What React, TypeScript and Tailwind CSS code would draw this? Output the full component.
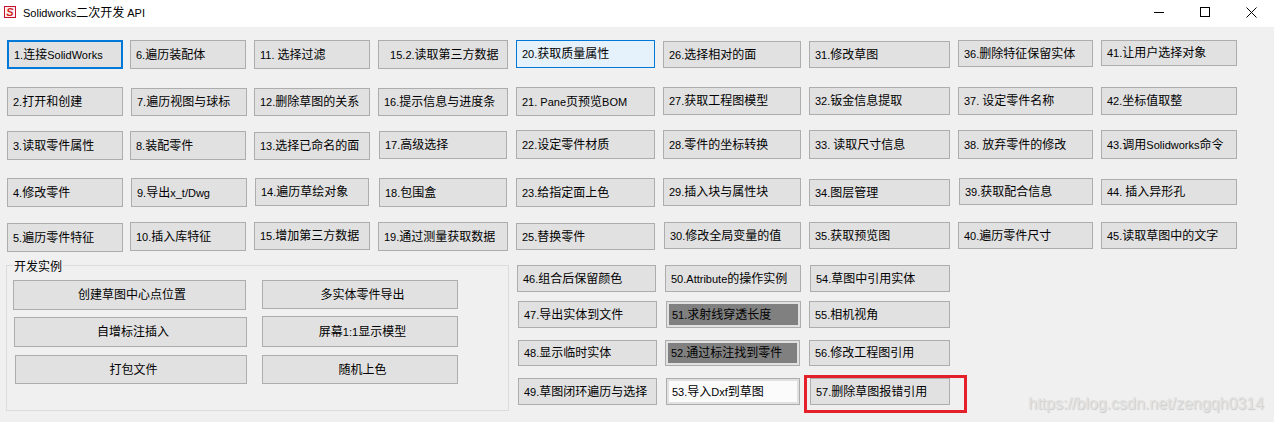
import React from "react";

type Kind = "normal" | "focus" | "hover" | "dark" | "white" | "mark";
type Item = [string, string, Kind?];

const CJK = /([\u3000-\u9fff\uff00-\uffef]+)/;

// mixed text: Chinese at 12px, latin a bit smaller like the WinForms default font
function Txt({ s }: { s: string }) {
  return (
    <>
      {s.split(CJK).map((p, i) =>
        p === "" ? null : CJK.test(p) ? (
          <span key={i} className="text-[12px]">
            {p}
          </span>
        ) : (
          <span key={i} className="text-[11px]">
            {p}
          </span>
        ),
      )}
    </>
  );
}

function Btn({ label, cls, kind = "normal", center = false }: { label: string; cls: string; kind?: Kind; center?: boolean }) {
  const align = center ? "justify-center" : "justify-start";

  if (kind === "dark" || kind === "white") {
    return (
      <button className={`flex shrink-0 border border-[#adadad] bg-[#e1e1e1] p-[2px] text-black ${cls}`}>
        <span
          className={`flex h-full w-full items-center whitespace-pre pl-[3px] leading-[14px] ${
            kind === "dark" ? "bg-[#808080]" : "bg-[#fbfbfb]"
          }`}
        >
          <Txt s={label} />
        </span>
      </button>
    );
  }

  let skin = "border border-[#adadad] bg-[#e1e1e1] pl-[5px]";
  if (kind === "focus") skin = "border-2 border-[#0078d7] bg-[#e1e1e1] pl-[5px]";
  if (kind === "hover") skin = "border border-[#0078d7] bg-[#e5f1fb] pl-[5px]";

  return (
    <button className={`relative flex shrink-0 items-center whitespace-pre leading-[14px] text-black ${align} ${skin} ${cls}`}>
      <Txt s={label} />
      {kind === "mark" && (
        <span className="absolute -left-[7px] -top-[4px] h-[38px] w-[163px] border-[3px] border-[#e4202b]" />
      )}
    </button>
  );
}

function Col({ items, cls }: { items: Item[]; cls: string }) {
  return (
    <div className={`flex shrink-0 flex-col ${cls}`}>
      {items.map(([label, c, kind]) => (
        <Btn key={label} label={label} cls={c} kind={kind} />
      ))}
    </div>
  );
}

const col1: Item[] = [
  ["1.连接SolidWorks", "mt-[13px] h-[29px] w-[116px]", "focus"],
  ["2.打开和创建", "mt-[18px] h-[29px] w-[116px]"],
  ["3.读取零件属性", "mt-[15px] h-[29px] w-[116px]"],
  ["4.修改零件", "mt-[18px] h-[29px] w-[116px]"],
  ["5.遍历零件特征", "mt-[16px] h-[29px] w-[116px]"],
];

const col2: Item[] = [
  ["6.遍历装配体", "mt-[13px] h-[29px] w-[116px]"],
  ["7.遍历视图与球标", "mt-[19px] ml-[1px] h-[28px] w-[116px]"],
  ["8.装配零件", "mt-[15px] h-[29px] w-[116px]"],
  ["9.导出x_t/Dwg", "mt-[18px] ml-[1px] h-[29px] w-[116px]"],
  ["10.插入库特征", "mt-[15px] h-[29px] w-[116px]"],
];

const col3: Item[] = [
  ["11. 选择过滤", "mt-[13px] h-[29px] w-[116px]"],
  ["12.删除草图的关系", "mt-[19px] h-[28px] w-[116px]"],
  ["13.选择已命名的面", "mt-[16px] h-[28px] w-[116px]"],
  ["14.遍历草绘对象", "mt-[18px] ml-[1px] h-[28px] w-[114px]"],
  ["15.增加第三方数据", "mt-[16px] h-[28px] w-[116px]"],
];

const col4: Item[] = [
  ["  15.2.读取第三方数据", "mt-[13px] h-[29px] w-[130px]"],
  ["16.提示信息与进度条", "mt-[19px] h-[28px] w-[130px]"],
  ["17.高级选择", "mt-[15px] ml-[1px] h-[28px] w-[128px]"],
  ["18.包围盒", "mt-[19px] ml-[1px] h-[29px] w-[128px]"],
  ["19.通过测量获取数据", "mt-[15px] h-[29px] w-[130px]"],
];

const col5: Item[] = [
  ["20.获取质量属性", "mt-[13px] h-[28px] w-[139px]", "hover"],
  ["21. Pane页预览BOM", "mt-[19px] h-[29px] w-[139px]"],
  ["22.设定零件材质", "mt-[14px] h-[29px] w-[139px]"],
  ["23.给指定面上色", "mt-[19px] h-[29px] w-[139px]"],
  ["25.替换零件", "mt-[16px] h-[27px] w-[139px]"],
  ["46.组合后保留颜色", "mt-[15px] ml-[1px] h-[27px] w-[139px]"],
  ["47.导出实体到文件", "mt-[9px] ml-[2px] h-[27px] w-[139px]"],
  ["48.显示临时实体", "mt-[12px] ml-[2px] h-[26px] w-[139px]"],
  ["49.草图闭环遍历与选择", "mt-[12px] ml-[2px] h-[27px] w-[139px]"],
];

const col6: Item[] = [
  ["26.选择相对的面", "mt-[14px] h-[27px] w-[138px]"],
  ["27.获取工程图模型", "mt-[19px] h-[28px] w-[138px]"],
  ["28.零件的坐标转换", "mt-[15px] h-[29px] w-[138px]"],
  ["29.插入块与属性块", "mt-[19px] h-[28px] w-[138px]"],
  ["30.修改全局变量的值", "mt-[16px] ml-[1px] h-[27px] w-[137px]"],
  ["50.Attribute的操作实例", "mt-[16px] ml-[2px] h-[27px] w-[136px]"],
  ["51.求射线穿透长度", "mt-[9px] ml-[3px] h-[27px] w-[135px]", "dark"],
  ["52.通过标注找到零件", "mt-[12px] ml-[2px] h-[26px] w-[135px]", "dark"],
  ["53.导入Dxf到草图", "mt-[12px] ml-[3px] h-[27px] w-[134px]", "white"],
];

const col7: Item[] = [
  ["31.修改草图", "mt-[14px] h-[27px] w-[141px]"],
  ["32.钣金信息提取", "mt-[19px] h-[28px] w-[141px]"],
  ["33. 读取尺寸信息", "mt-[15px] h-[29px] w-[141px]"],
  ["34.图层管理", "mt-[20px] h-[27px] w-[141px]"],
  ["35.获取预览图", "mt-[16px] h-[27px] w-[141px]"],
  ["54.草图中引用实体", "mt-[16px] ml-[1px] h-[27px] w-[140px]"],
  ["55.相机视角", "mt-[9px] h-[27px] w-[141px]"],
  ["56.修改工程图引用", "mt-[12px] h-[26px] w-[141px]"],
  ["57.删除草图报错引用", "mt-[12px] ml-[1px] h-[27px] w-[140px]", "mark"],
];

const col8: Item[] = [
  ["36.删除特征保留实体", "mt-[13px] h-[27px] w-[135px]"],
  ["37. 设定零件名称", "mt-[20px] h-[28px] w-[135px]"],
  ["38. 放弃零件的修改", "mt-[15px] h-[29px] w-[135px]"],
  ["39.获取配合信息", "mt-[19px] ml-[1px] h-[27px] w-[134px]"],
  ["40.遍历零件尺寸", "mt-[17px] h-[27px] w-[135px]"],
];

const col9: Item[] = [
  ["41.让用户选择对象", "mt-[13px] h-[26px] w-[136px]"],
  ["42.坐标值取整", "mt-[21px] h-[28px] w-[136px]"],
  ["43.调用Solidworks命令", "mt-[15px] h-[29px] w-[136px]"],
  ["44. 插入异形孔", "mt-[20px] h-[26px] w-[136px]"],
  ["45.读取草图中的文字", "mt-[17px] h-[27px] w-[136px]"],
];

export default function App() {
  return (
    <div className="relative flex h-[422px] w-[1274px] flex-col overflow-hidden bg-[#f0f0f0] font-['Liberation_Sans','Noto_Sans_CJK_SC',sans-serif] text-black">
      {/* title bar */}
      <div className="flex h-[27px] shrink-0 items-start bg-white">
        <div className="ml-[4px] mt-[6px] flex h-[12px] w-[12px] items-center justify-center border border-[#c8102e] bg-[#fdf2f2]">
          <span className="text-[11px] font-bold italic leading-none text-[#d21f26]">S</span>
        </div>
        <div className="ml-[7px] mt-[5px] leading-[14px]">
          <Txt s="Solidworks二次开发 API" />
        </div>
        <div className="ml-auto flex">
          <div className="flex h-[24px] w-[46px] items-center justify-center">
            <svg width="10" height="10" viewBox="0 0 10 10">
              <path d="M0 5.5h10" stroke="#000" strokeWidth="1" />
            </svg>
          </div>
          <div className="flex h-[24px] w-[46px] items-center justify-center">
            <svg width="10" height="10" viewBox="0 0 10 10">
              <rect x="0.5" y="0.5" width="9" height="9" fill="none" stroke="#000" strokeWidth="1" />
            </svg>
          </div>
          <div className="flex h-[24px] w-[46px] items-center justify-center">
            <svg width="11" height="11" viewBox="0 0 11 11">
              <path d="M0.5 0.5l10 10M10.5 0.5l-10 10" stroke="#000" strokeWidth="1" />
            </svg>
          </div>
        </div>
      </div>

      {/* form body */}
      <div className="flex items-start">
        <div className="ml-[6px] flex w-[503px] shrink-0 flex-col">
          <div className="flex items-start">
            <Col items={col1} cls="ml-[1px] w-[116px]" />
            <Col items={col2} cls="ml-[7px] w-[117px]" />
            <Col items={col3} cls="ml-[7px] w-[116px]" />
            <Col items={col4} cls="ml-[8px] w-[130px]" />
          </div>

          <div className="relative mt-[13px] h-[146px] w-[503px] border border-[#dcdcdc]">
            <span className="absolute -top-[6px] left-[6px] bg-[#f0f0f0] px-[1px] text-[12px] leading-[14px]">开发实例</span>
            <div className="flex pl-[6px] pt-[14px]">
              <div className="flex w-[234px] flex-col">
                <Btn label="创建草图中心点位置" cls="h-[30px] w-[233px]" center />
                <Btn label="自增标注插入" cls="mt-[7px] ml-[1px] h-[30px] w-[233px]" center />
                <Btn label="打包文件" cls="mt-[8px] ml-[2px] h-[29px] w-[232px]" center />
              </div>
              <div className="ml-[15px] flex flex-col">
                <Btn label="多实体零件导出" cls="h-[29px] w-[196px]" center />
                <Btn label="屏幕1:1显示模型" cls="mt-[7px] h-[31px] w-[196px]" center />
                <Btn label="随机上色" cls="mt-[8px] h-[29px] w-[196px]" center />
              </div>
            </div>
          </div>
        </div>

        <div className="ml-[7px] flex items-start">
          <Col items={col5} cls="w-[141px]" />
          <Col items={col6} cls="ml-[6px] w-[138px]" />
          <Col items={col7} cls="ml-[8px] w-[141px]" />
          <Col items={col8} cls="ml-[8px] w-[135px]" />
          <Col items={col9} cls="ml-[8px] w-[136px]" />
        </div>
      </div>

      {/* blog watermark */}
      <span className="absolute bottom-[9px] right-[10px] text-[16px] leading-[18px] text-[#e2e2e2] [text-shadow:1px_1px_1px_#c9c9c9]">
        https://blog.csdn.net/zengqh0314
      </span>
    </div>
  );
}
